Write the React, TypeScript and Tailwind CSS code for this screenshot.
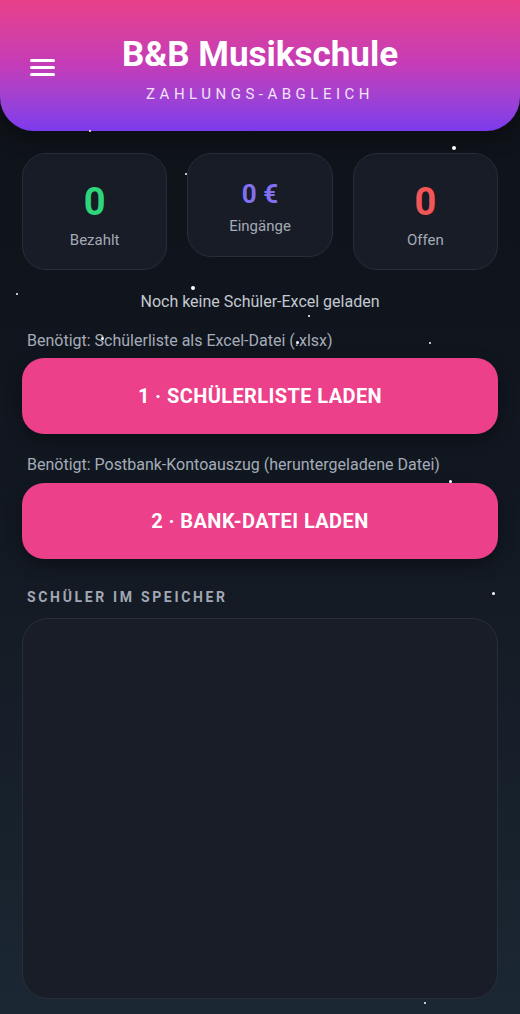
import React from 'react';

const stars: { x: number; y: number; s: number }[] = [
  { x: 89, y: 130, s: 2 },
  { x: 452, y: 146, s: 4 },
  { x: 185, y: 173, s: 2 },
  { x: 16, y: 293, s: 2 },
  { x: 191, y: 286, s: 4 },
  { x: 308, y: 315, s: 2 },
  { x: 101, y: 337, s: 3 },
  { x: 296, y: 341, s: 3 },
  { x: 429, y: 342, s: 2 },
  { x: 449, y: 480, s: 3 },
  { x: 492, y: 592, s: 3 },
  { x: 424, y: 1002, s: 2 },
];

function StatCard({ value, label, color, big }: { value: string; label: string; color: string; big: boolean }) {
  return (
    <div className={`flex flex-col items-center rounded-[24px] border border-[#272e3a] bg-[#171c26] ${big ? 'pt-[26px] pb-[19px]' : 'pt-[23px] pb-[20px]'}`}>
      <div className={`flex items-center font-bold leading-none ${color} ${big ? 'h-[44px] text-[38px]' : 'h-[34px] text-[26px]'}`}>{value}</div>
      <div className={`text-[15px] leading-[20px] text-[#a3aab6] ${big ? 'mt-[6px]' : 'mt-[5px]'}`}>{label}</div>
    </div>
  );
}

export default function App() {
  return (
    <div className="relative min-h-[1014px] w-full overflow-hidden bg-gradient-to-b from-[#0d1117] via-[#121821] to-[#1b2733] pb-[15px]" style={{ fontFamily: 'Roboto, "Noto Sans", sans-serif' }}>
      {/* header */}
      <header className="relative flex h-[131px] flex-col items-center rounded-b-[34px] bg-gradient-to-b from-[#e9408a] via-[#c43bb8] to-[#7c3aed] pt-[34px] shadow-[0_6px_20px_rgba(0,0,0,0.35)]">
        <button className="absolute left-[30px] top-[59px] flex w-[25px] flex-col gap-[4.5px]">
          <span className="block h-[2.5px] w-full rounded bg-white" />
          <span className="block h-[2.5px] w-full rounded bg-white" />
          <span className="block h-[2.5px] w-full rounded bg-white" />
        </button>
        <h1 className="text-[35px] font-bold leading-[42px] text-white">B&amp;B Musikschule</h1>
        <p className="mt-[9px] text-[15px] leading-[18px] tracking-[0.3em] text-white/85">ZAHLUNGS-ABGLEICH</p>
      </header>

      <main className="flex flex-col px-[22px]">
        <div className="mt-[22px] grid grid-cols-3 items-start gap-[20px]">
          <StatCard value="0" label="Bezahlt" color="text-[#2fd57a]" big />
          <StatCard value="0 €" label="Eingänge" color="text-[#8170f0]" big={false} />
          <StatCard value="0" label="Offen" color="text-[#f25656]" big />
        </div>

        <p className="mt-[22px] text-center text-[16px] leading-[20px] text-[#c3c8d1]">Noch keine Schüler-Excel geladen</p>

        <p className="mt-[19px] px-[5px] text-[16px] leading-[20px] text-[#a5acb8]">Benötigt: Schülerliste als Excel-Datei (.xlsx)</p>
        <button className="mt-[7px] h-[76px] w-full rounded-[22px] bg-[#ec408b] text-[20px] font-bold tracking-[0.02em] text-white shadow-[0_6px_16px_rgba(0,0,0,0.35)]">
          1 · SCHÜLERLISTE LADEN
        </button>

        <p className="mt-[21px] px-[5px] text-[16px] leading-[20px] text-[#a5acb8]">Benötigt: Postbank-Kontoauszug (heruntergeladene Datei)</p>
        <button className="mt-[8px] h-[76px] w-full rounded-[22px] bg-[#ec408b] text-[20px] font-bold tracking-[0.02em] text-white shadow-[0_6px_16px_rgba(0,0,0,0.35)]">
          2 · BANK-DATEI LADEN
        </button>

        <h2 className="mt-[29px] px-[5px] text-[14px] font-bold leading-[18px] tracking-[0.19em] text-[#a1a8b3]">SCHÜLER IM SPEICHER</h2>
        <div className="mt-[12px] h-[381px] w-full rounded-[26px] border border-[#282f3b] bg-[#191d28]" />
      </main>

      {stars.map((st, i) => (
        <span
          key={i}
          className="pointer-events-none absolute rounded-full bg-white"
          style={{ left: st.x, top: st.y, width: st.s, height: st.s }}
        />
      ))}
    </div>
  );
}
